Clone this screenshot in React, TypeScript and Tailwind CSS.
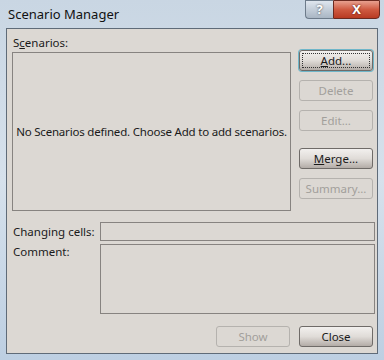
import React from 'react'

const FONT = { fontFamily: '"Noto Sans", "Open Sans", sans-serif' }

function Btn({ children, disabled, focus }: { children: React.ReactNode; disabled?: boolean; focus?: boolean }) {
  return (
    <div
      className={
        'relative flex h-[21px] w-[74px] items-center justify-center rounded-[3px] border text-[11.5px] ' +
        (disabled
          ? 'border-[#b5b2ae] bg-[#dcd8d3] text-[#a29f9b]'
          : 'border-[#6f6b68] bg-gradient-to-b from-[#f2f0ee] via-[#e0dcd8] to-[#b3aca7] text-[#1a1a1a]') +
        (focus ? ' shadow-[0_0_0_1px_#6fb6c9]' : '')
      }
    >
      {focus && <div className="absolute inset-[2px] border border-dotted border-[#333]" />}
      {children}
    </div>
  )
}

export default function App() {
  return (
    <div className="h-[360px] w-[384px] bg-gradient-to-b from-[#c9d6e3] via-[#d6e1ec] to-[#bdcfe2] text-[11.5px] text-[#1a1a1a]" style={FONT}>
      {/* title bar */}
      <div className="flex h-[28px] items-start justify-between">
        <div className="pl-[8px] pt-[5px] text-[13px] text-[#111]">Scenario Manager</div>
        <div className="mr-[4px] flex">
          <div className="flex h-[19px] w-[28px] items-center justify-center rounded-bl-[4px] border border-r-0 border-[#6d7b8a] bg-gradient-to-b from-[#dfe6ee] to-[#a9b6c4] text-[13px] font-bold text-white [text-shadow:0_0_2px_#333]">
            ?
          </div>
          <div className="flex h-[19px] w-[47px] items-center justify-center rounded-br-[4px] border border-[#6b2a20] bg-gradient-to-b from-[#e7a08f] via-[#cf5a41] to-[#b83a22] text-[13px] font-bold text-white [text-shadow:0_0_2px_#400]">
            X
          </div>
        </div>
      </div>

      {/* client area */}
      <div className="mx-[6px] h-[326px] border border-[#5f6b78] bg-[#dcd8d3] pl-[5px] pr-[2px] pt-[5px]">
        <div className="flex">
          <div className="w-[279px]">
            <div className="h-[18px] pl-[1px] leading-[18px]">
              S<span className="underline">c</span>enarios:
            </div>
            <div className="flex h-[159px] items-center justify-center whitespace-nowrap border border-[#878380] bg-[#dcd8d3] tracking-[-0.2px]">
              No Scenarios defined. Choose Add to add scenarios.
            </div>
          </div>
          <div className="ml-[8px] flex flex-col pt-[16px]">
            <Btn focus>
              <span className="underline">A</span>dd...
            </Btn>
            <div className="mt-[9px]">
              <Btn disabled>Delete</Btn>
            </div>
            <div className="mt-[9px]">
              <Btn disabled>Edit...</Btn>
            </div>
            <div className="mt-[17px]">
              <Btn>
                <span className="underline">M</span>erge...
              </Btn>
            </div>
            <div className="mt-[9px]">
              <Btn disabled>Summary...</Btn>
            </div>
          </div>
        </div>

        <div className="mt-[11px] flex items-center">
          <div className="w-[88px] pl-[1px]">Changing cells:</div>
          <div className="h-[19px] w-[275px] border border-[#878380]" />
        </div>
        <div className="mt-[3px] flex">
          <div className="w-[88px] pl-[1px] leading-[16px]">Comment:</div>
          <div className="h-[70px] w-[275px] border border-[#878380]" />
        </div>

        <div className="mt-[12px] flex justify-end gap-[9px] pr-[2px]">
          <Btn disabled>Show</Btn>
          <Btn>Close</Btn>
        </div>
      </div>
    </div>
  )
}
